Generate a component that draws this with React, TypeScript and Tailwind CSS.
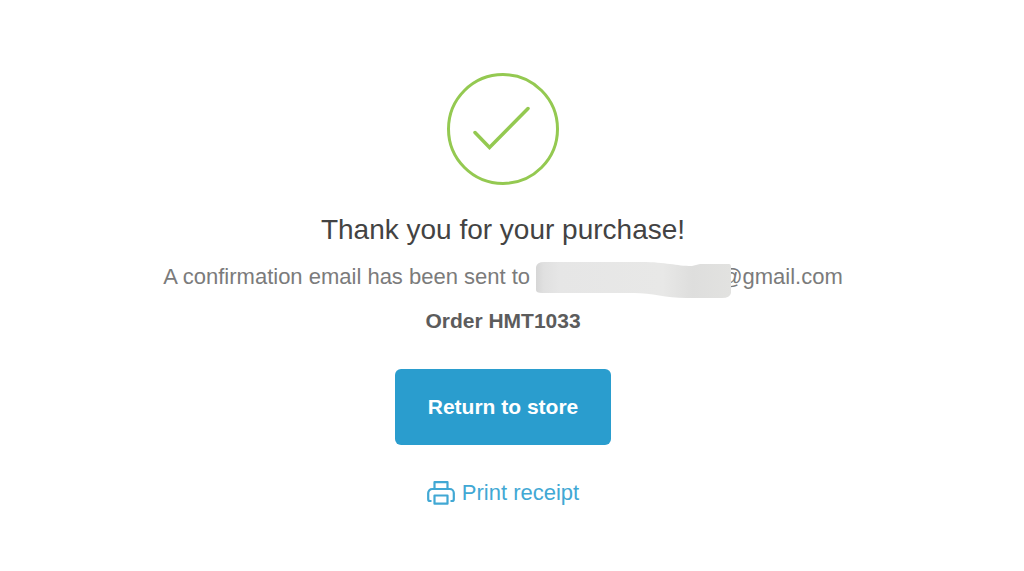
function SuccessIcon() {
  return (
    <svg className="size-28" viewBox="0 0 112 112" fill="none" stroke="#94c951" strokeWidth="3" aria-hidden="true">
      <circle cx="56" cy="56" r="54.5" />
      <path d="M28 59.5 42.5 74.5 81 35.5" strokeWidth="3.5" strokeLinejoin="miter" strokeLinecap="round" />
    </svg>
  );
}

function PrinterIcon() {
  return (
    <svg className="h-6 w-7" viewBox="0 0 28 24" fill="none" stroke="#41a8d4" strokeWidth="2.2" strokeLinejoin="round" aria-hidden="true">
      <path d="M7.5 7V1.2h13V7" />
      <path d="M4.5 20H3a1.8 1.8 0 0 1-1.8-1.8V12a4 4 0 0 1 4-4h17.6a4 4 0 0 1 4 4v6.2A1.8 1.8 0 0 1 25 20h-1.5" />
      <path d="M7.5 14.5h13v8.2h-13z" />
    </svg>
  );
}

function RedactedName() {
  return (
    <span className="relative inline-block w-46">
      l
      <svg className="absolute -top-px left-0 h-10 w-50" viewBox="0 0 200 40" aria-label="hidden" role="img">
        <defs>
          <linearGradient id="smear" x1="0" x2="1" y1="0" y2="0">
            <stop offset="0" stopColor="#d6d6d6" />
            <stop offset="0.04" stopColor="#e0e0e0" />
            <stop offset="0.12" stopColor="#e6e6e6" />
            <stop offset="0.65" stopColor="#e8e8e7" />
            <stop offset="0.8" stopColor="#dededd" />
            <stop offset="1" stopColor="#e2e2e0" />
          </linearGradient>
        </defs>
        <path
          d="M0 7Q1 2 8 2H106C130 2 140 6 156 6L164 4H193Q195 4 195 7V33Q194 38 186 38H150C130 38 116 33 98 33H6Q0 33 0 30Z"
          fill="url(#smear)"
        />
      </svg>
    </span>
  );
}

export default function App() {
  return (
    <main className="flex min-h-screen flex-col items-center bg-white pt-[73px] pr-[18px] font-['Liberation_Sans',Arial,sans-serif] text-[22px] leading-8">
      <SuccessIcon />
      <h1 className="mt-[25px] text-[28px] leading-10 text-[#434343]">Thank you for your purchase!</h1>
      <p className="mt-[11px] whitespace-nowrap text-[#7b7b7b]">
        A confirmation email has been sent to <RedactedName />
        @gmail.com
      </p>
      <p className="mt-3 text-[21px] leading-8 font-bold text-[#5c5c5c]">Order HMT1033</p>
      <button type="button" className="mt-8 rounded-md bg-[#2a9dce] px-[33px] py-5 text-[21px] leading-9 font-bold text-white">
        Return to store
      </button>
      <a href="#print" className="mt-8 flex items-center gap-[7px] text-[#41a8d4]">
        <PrinterIcon />
        Print receipt
      </a>
    </main>
  );
}
